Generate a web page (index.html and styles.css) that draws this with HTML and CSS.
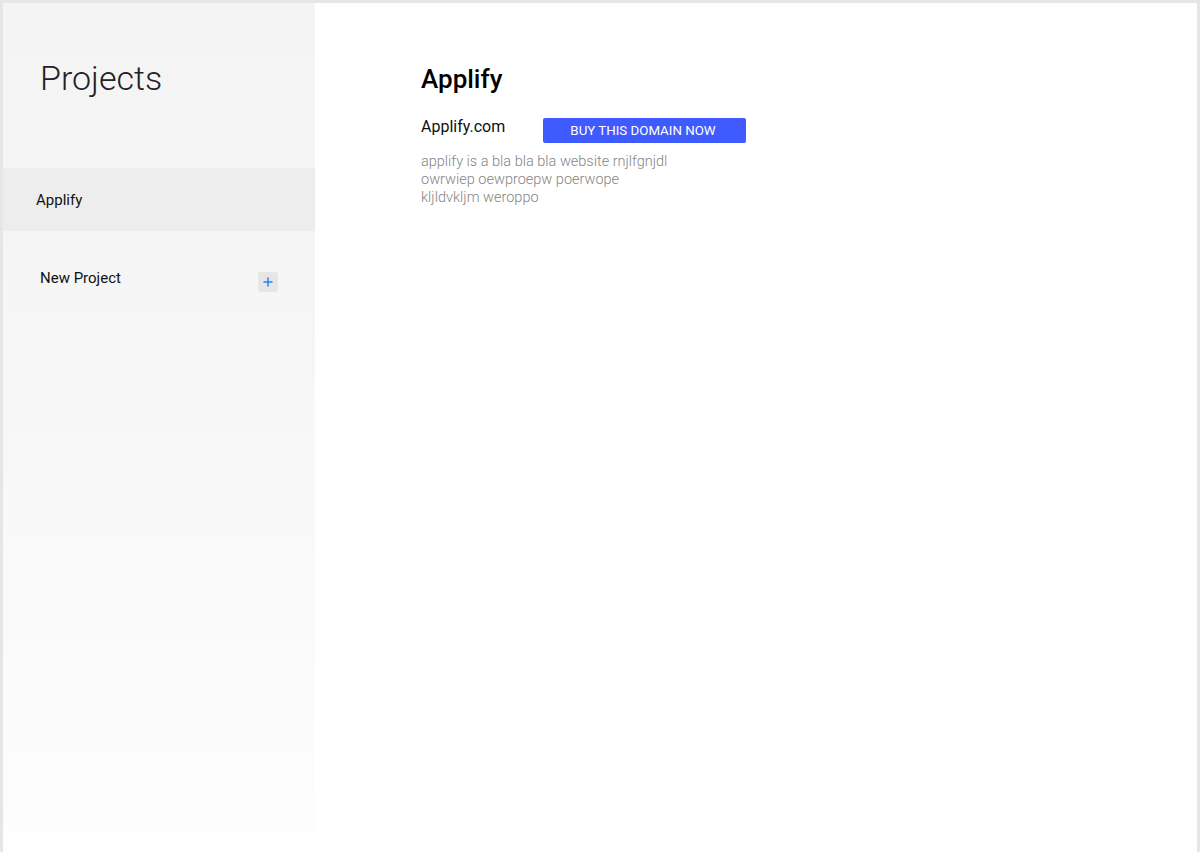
FILE: index.html
```html
<!DOCTYPE html>
<html>
<head>
<meta charset="utf-8">
<link rel="stylesheet" href="styles.css">
</head>
<body>
<div class="frame">
  <aside class="sidebar">
    <h1 class="side-title">Projects</h1>
    <div class="side-item active">Applify</div>
    <div class="side-new">
      <span>New Project</span>
      <span class="plus-btn"><svg width="10" height="10" viewBox="0 0 10 10"><path d="M5 0.5V9.5M0.5 5H9.5" stroke="#2b7dff" stroke-width="1.5"/></svg></span>
    </div>
  </aside>
  <main class="main">
    <h2 class="title">Applify</h2>
    <div class="domain-row">
      <span class="domain">Applify.com</span>
      <button class="buy">BUY THIS DOMAIN NOW</button>
    </div>
    <p class="desc">applify is a bla bla bla website rnjlfgnjdl<br>owrwiep oewproepw poerwope<br>kljldvkljm weroppo</p>
  </main>
</div>
</body>
</html>
```
FILE: styles.css
```css
html, body { margin: 0; padding: 0; background: #fff; }
body { font-family: Roboto, "Liberation Sans", sans-serif; color: #111; }
.frame {
  width: 1194px;
  height: 849px;
  border: 3px solid #e6e6e6;
  border-bottom: none;
  display: flex;
  background: #fff;
}
.sidebar {
  width: 312px;
  height: 828px;
  background: linear-gradient(#f4f4f4 0%, #f6f6f6 40%, #fdfdfd 100%);
  display: flex;
  flex-direction: column;
}
.side-title {
  margin: 0;
  padding: 54px 0 0 37px;
  height: 110px;
  box-sizing: border-box;
  font-weight: 300;
  font-size: 34px;
  line-height: 42px;
  color: #222;
}
.side-item {
  margin-top: 55px;
  height: 63px;
  display: flex;
  align-items: center;
  padding-left: 33px;
  font-size: 15px;
  background: #ededed;
  color: #111;
}
.side-new {
  margin-top: 30px;
  display: flex;
  align-items: center;
  justify-content: space-between;
  padding: 0 37px 0 37px;
  font-size: 15px;
  height: 34px;
}
.plus-btn {
  width: 20px;
  height: 20px;
  background: #e6e6e6;
  border-radius: 3px;
  display: flex;
  align-items: center;
  justify-content: center;
  margin-top: 7px;
}
.main {
  flex: 1;
  padding: 60px 0 0 106px;
}
.title {
  margin: 0;
  font-size: 26px;
  font-weight: 500;
  line-height: 32px;
  color: #000;
}
.domain-row {
  margin-top: 23px;
  display: flex;
  align-items: flex-start;
}
.domain {
  font-size: 16px;
  line-height: 20px;
  width: 122px;
  margin-top: -1px;
}
.buy {
  width: 203px;
  height: 25px;
  border: none;
  border-radius: 2px;
  background: #3f5afe;
  color: #fff;
  font-family: Roboto, "Liberation Sans", sans-serif;
  font-size: 13.3px;
  padding: 0 3px 0 0;
  line-height: 25px;
}
.desc {
  margin: 10px 0 0;
  font-size: 14.5px;
  font-weight: 300;
  line-height: 18px;
  color: #858585;
}
```
